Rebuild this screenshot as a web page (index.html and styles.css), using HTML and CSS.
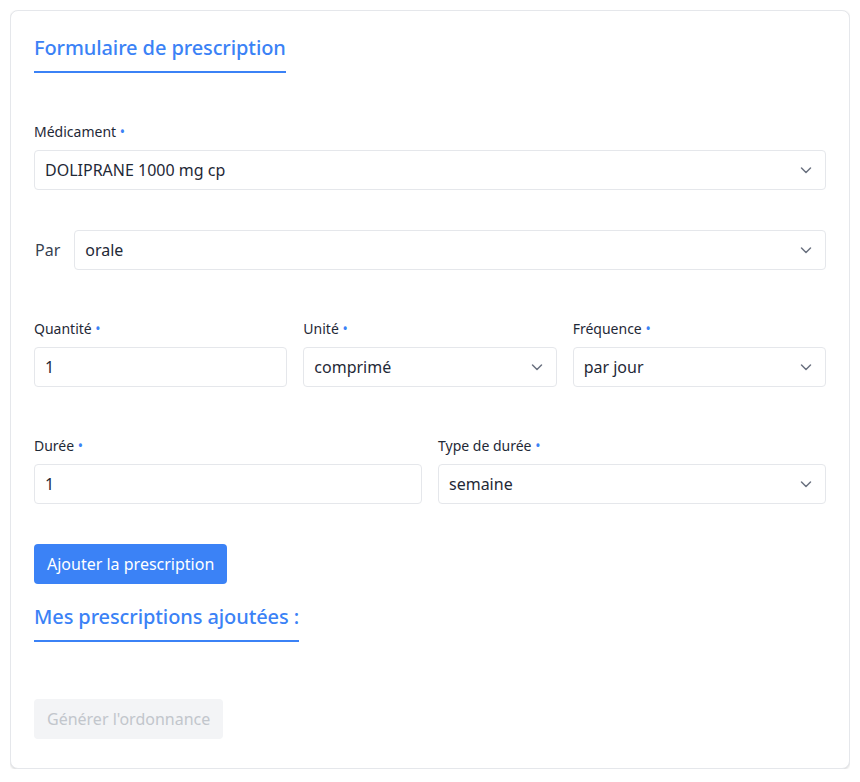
FILE: index.html
```html
<!DOCTYPE html>
<html lang="fr">
<head>
<meta charset="utf-8">
<title>Formulaire de prescription</title>
<link rel="stylesheet" href="styles.css">
</head>
<body>
<div class="card">
  <h2 class="section-title">Formulaire de prescription</h2>

  <div class="field first">
    <label class="label">Médicament <span class="req">•</span></label>
    <div class="select">
      <span>DOLIPRANE 1000 mg cp</span>
      <svg class="chev" viewBox="0 0 20 20" width="20" height="20"><path d="M5.5 8l4.5 4.5L14.5 8" fill="none" stroke="#6b7280" stroke-width="1.5" stroke-linecap="round" stroke-linejoin="round"/></svg>
    </div>
  </div>

  <div class="par-row">
    <span class="par-label">Par</span>
    <div class="select grow">
      <span>orale</span>
      <svg class="chev" viewBox="0 0 20 20" width="20" height="20"><path d="M5.5 8l4.5 4.5L14.5 8" fill="none" stroke="#6b7280" stroke-width="1.5" stroke-linecap="round" stroke-linejoin="round"/></svg>
    </div>
  </div>

  <div class="grid three">
    <div class="field">
      <label class="label">Quantité <span class="req">•</span></label>
      <div class="input">1</div>
    </div>
    <div class="field">
      <label class="label">Unité <span class="req">•</span></label>
      <div class="select">
        <span>comprimé</span>
        <svg class="chev" viewBox="0 0 20 20" width="20" height="20"><path d="M5.5 8l4.5 4.5L14.5 8" fill="none" stroke="#6b7280" stroke-width="1.5" stroke-linecap="round" stroke-linejoin="round"/></svg>
      </div>
    </div>
    <div class="field">
      <label class="label">Fréquence <span class="req">•</span></label>
      <div class="select">
        <span>par jour</span>
        <svg class="chev" viewBox="0 0 20 20" width="20" height="20"><path d="M5.5 8l4.5 4.5L14.5 8" fill="none" stroke="#6b7280" stroke-width="1.5" stroke-linecap="round" stroke-linejoin="round"/></svg>
      </div>
    </div>
  </div>

  <div class="grid two">
    <div class="field">
      <label class="label">Durée <span class="req">•</span></label>
      <div class="input">1</div>
    </div>
    <div class="field">
      <label class="label">Type de durée <span class="req">•</span></label>
      <div class="select">
        <span>semaine</span>
        <svg class="chev" viewBox="0 0 20 20" width="20" height="20"><path d="M5.5 8l4.5 4.5L14.5 8" fill="none" stroke="#6b7280" stroke-width="1.5" stroke-linecap="round" stroke-linejoin="round"/></svg>
      </div>
    </div>
  </div>

  <button class="btn primary">Ajouter la prescription</button>

  <div class="list-block">
    <h2 class="section-title">Mes prescriptions ajoutées :</h2>
  </div>

  <button class="btn disabled">Générer l'ordonnance</button>
</div>
</body>
</html>
```
FILE: styles.css
```css
* { box-sizing: border-box; }
body {
  margin: 10px;
  font-family: "Noto Sans", "Open Sans", sans-serif;
  color: #1f2937;
  background: #fff;
}
.card {
  width: 840px;
  border: 1px solid #e5e7eb;
  border-radius: 8px;
  box-shadow: 0 1px 3px rgba(0,0,0,0.10), 0 1px 2px rgba(0,0,0,0.06);
  padding: 23px 23px 29px 23px;
  background: #fff;
}
.section-title {
  display: inline-block;
  margin: 0;
  font-size: 20px;
  line-height: 28px;
  font-weight: 500;
  color: #3b82f6;
  padding-bottom: 9px;
  border-bottom: 2px solid #3b82f6;
  letter-spacing: -0.1px;
}
.field { display: flex; flex-direction: column; }
.field.first { margin-top: 49px; }
.label {
  display: block;
  height: 20px;
  font-size: 14px;
  line-height: 20px;
  color: #1f2937;
  margin-bottom: 8px;
}
.req { color: #3b82f6; font-size: 14px; line-height: 0; }
.select, .input {
  height: 40px;
  border: 1px solid #e5e7eb;
  border-radius: 4px;
  display: flex;
  align-items: center;
  padding: 0 10px;
  font-size: 16px;
  color: #1f2937;
  background: #fff;
}
.select { justify-content: space-between; }
.chev { margin-right: -1px; }
.par-row {
  margin-top: 40px;
  display: flex;
  align-items: center;
  gap: 14px;
}
.par-label { font-size: 16px; color: #374151; padding-left: 1px; }
.grow { flex: 1; }
.grid { display: grid; gap: 16px; margin-top: 49px; }
.three { grid-template-columns: 1fr 1fr 1fr; }
.two { grid-template-columns: 1fr 1fr; }
.btn {
  display: block;
  height: 40px;
  border: none;
  border-radius: 4px;
  font-family: inherit;
  font-size: 16px;
  padding: 0 13px;
}
.primary { background: #3b82f6; color: #fff; margin-top: 40px; }
.list-block { margin-top: 19px; }
.disabled { background: #f3f4f6; color: #c2c6cc; margin-top: 57px; }
```
